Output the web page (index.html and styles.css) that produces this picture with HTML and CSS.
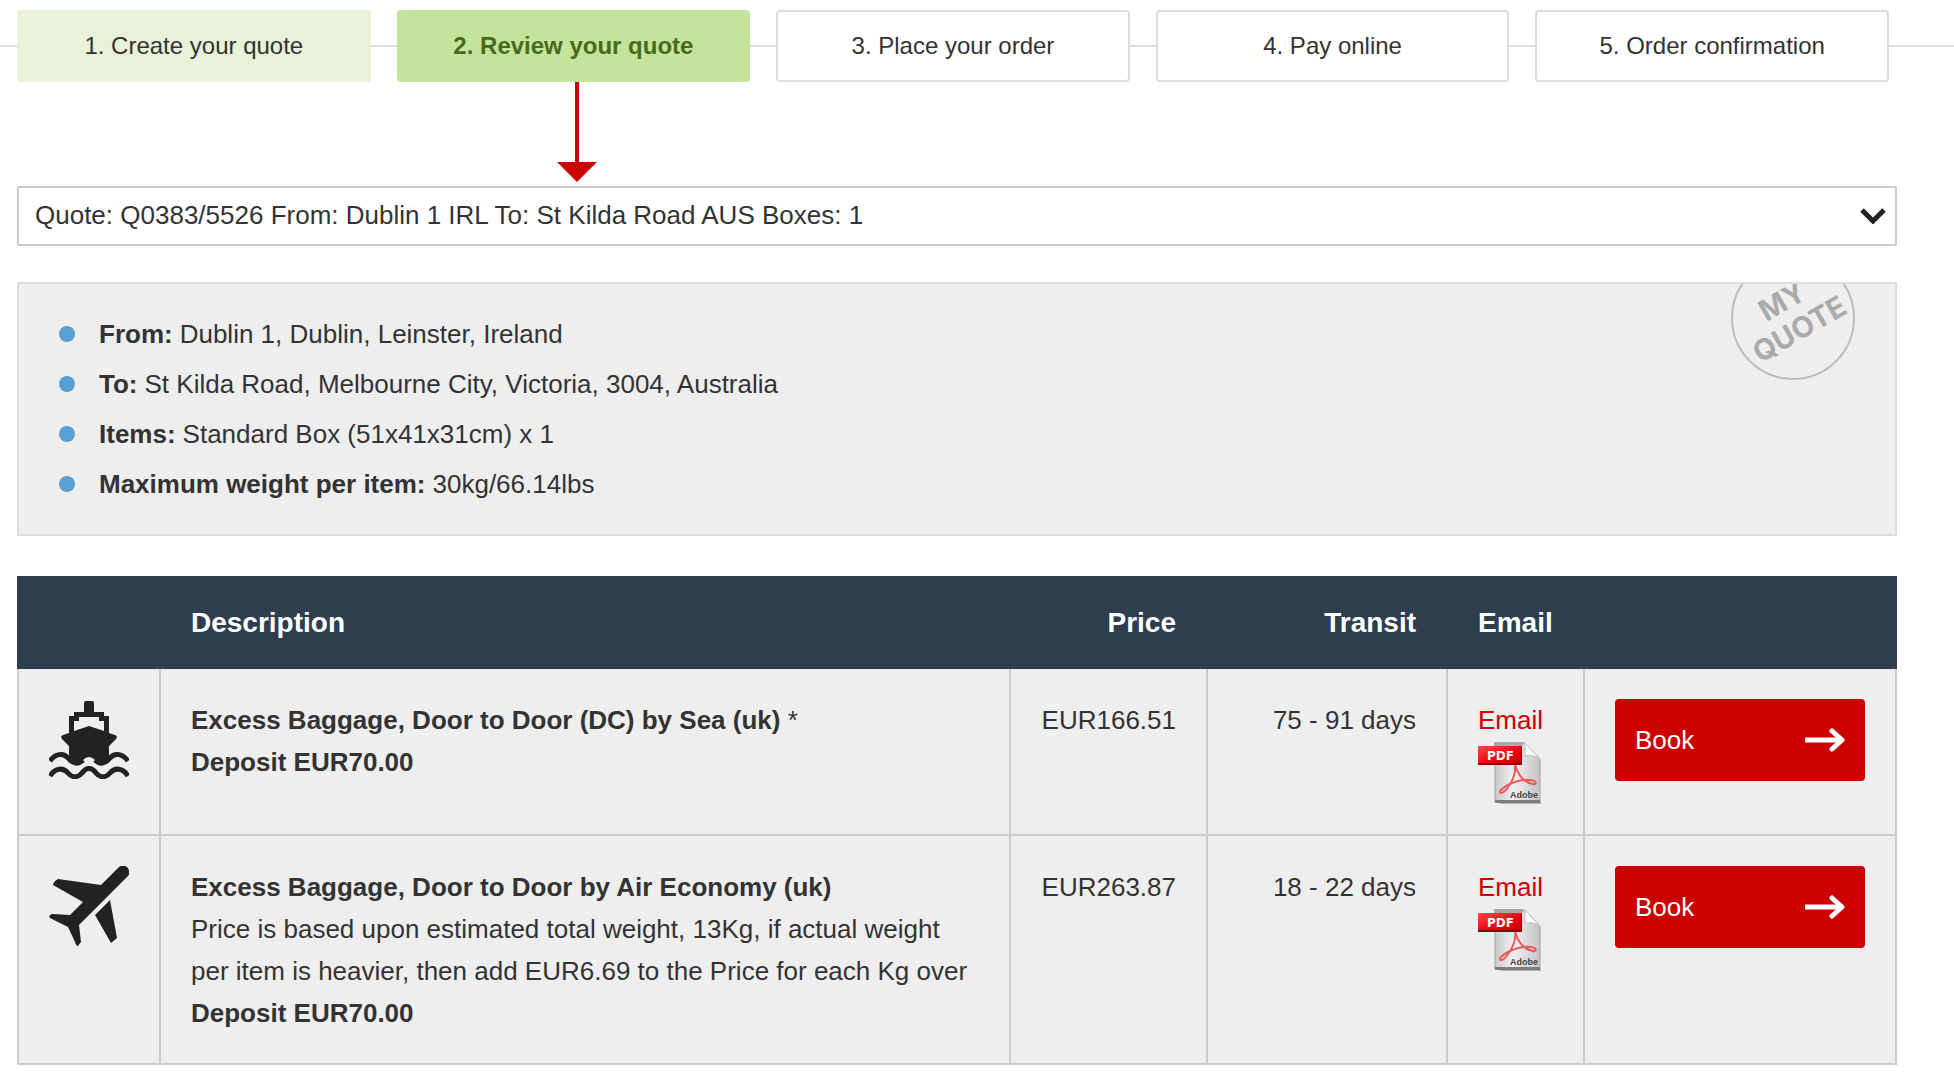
FILE: index.html
```html
<!DOCTYPE html>
<html lang="en">
<head>
  <meta charset="UTF-8" />
  <meta name="viewport" content="width=device-width, initial-scale=1.0"/>
  <title>Review your quote</title>
  <link rel="stylesheet" href="styles.css">
</head>
<body>

  <!-- shared icons -->
  <svg class="icon-defs" width="0" height="0" aria-hidden="true">
    <defs>
      <linearGradient id="pageFill" x1="0" y1="0" x2="1" y2="0">
        <stop offset="0" stop-color="#c9c9cc"/>
        <stop offset="0.4" stop-color="#f1f1f3"/>
        <stop offset="1" stop-color="#c4c4c6"/>
      </linearGradient>
      <linearGradient id="redFill" x1="0" y1="0" x2="1" y2="1">
        <stop offset="0" stop-color="#ff4a4a"/>
        <stop offset="0.6" stop-color="#e8000b"/>
        <stop offset="1" stop-color="#c00008"/>
      </linearGradient>
    </defs>
    <symbol id="icon-pdf" viewBox="0 0 64 64">
      <path d="M22 61h41v2H22z" fill="#b5b5b5"/>
      <path d="M17 2h30l15 16v43H17z" fill="url(#pageFill)" stroke="#a2a2a4" stroke-width="1"/>
      <path d="M16 1h29v4H16z" fill="#a9a9ab"/>
      <path d="M17 59h45v3H17z" fill="#7c7c7c"/>
      <path d="M47 2l15 16c-4-3-9-4-15-3z" fill="#fff" stroke="#bdbdbf" stroke-width="1"/>
      <path d="M37 23c1 9-1 14-5 20-3 5-6 9-9 9-3-1 1-5 7-8 8-4 16-6 23-5 6 1 6 5 2 4-8-1-15-8-18-20z" fill="none" stroke="#ec5a5a" stroke-width="2"/>
      <rect x="0" y="5" width="44" height="18" fill="url(#redFill)"/>
      <path d="M0 22h44v2H0zM43 6h1v17h-1z" fill="#8c0006"/>
      <text x="9" y="19" class="pdf-label">PDF</text>
      <text x="32" y="57" class="adobe-label">Adobe</text>
    </symbol>
    <symbol id="icon-arrow" viewBox="0 0 40 24">
      <path d="M0 12h36" fill="none" stroke="#fff" stroke-width="5"/>
      <path d="M27 3l10 9-10 9" fill="none" stroke="#fff" stroke-width="5" stroke-linejoin="round" stroke-linecap="round"/>
    </symbol>
  </svg>

  <ol class="steps">
    <li class="step done">1. Create your quote</li>
    <li class="step current">2. Review your quote
      <svg class="step-arrow" viewBox="0 0 40 100" aria-hidden="true">
        <path d="M18 0h4v80h18L20 100 0 80h18z" fill="#c00"/>
      </svg>
    </li>
    <li class="step">3. Place your order</li>
    <li class="step">4. Pay online</li>
    <li class="step">5. Order confirmation</li>
  </ol>

  <main class="content">
    <div class="quote-select">
      <select aria-label="Quote">
        <option>Quote: Q0383/5526 From: Dublin 1 IRL To: St Kilda Road AUS Boxes: 1</option>
      </select>
      <svg class="chevron" viewBox="0 0 26 16" aria-hidden="true">
        <path d="M2 2l11 11L24 2" fill="none" stroke="#222" stroke-width="5"/>
      </svg>
    </div>

    <section class="summary">
      <ul>
        <li><strong>From:</strong> Dublin 1, Dublin, Leinster, Ireland</li>
        <li><strong>To:</strong> St Kilda Road, Melbourne City, Victoria, 3004, Australia</li>
        <li><strong>Items:</strong> Standard Box (51x41x31cm) x 1</li>
        <li><strong>Maximum weight per item:</strong> 30kg/66.14lbs</li>
      </ul>
      <svg class="stamp" viewBox="0 0 126 98">
        <circle cx="63" cy="34" r="61" fill="none" stroke="#bbb" stroke-width="2"/>
        <g transform="rotate(-30 63 34)">
          <text x="62" y="24">MY</text>
          <text x="63" y="57">QUOTE</text>
        </g>
      </svg>
    </section>

    <table class="quotes">
      <colgroup>
        <col class="col-icon">
        <col>
        <col class="col-price">
        <col class="col-transit">
        <col class="col-email">
        <col class="col-book">
      </colgroup>
      <thead>
        <tr>
          <th></th>
          <th>Description</th>
          <th class="right">Price</th>
          <th class="right">Transit</th>
          <th>Email</th>
          <th></th>
        </tr>
      </thead>
      <tbody>
        <tr>
          <td>
            <svg class="mode-icon" viewBox="0 0 80 80" role="img" aria-label="Sea">
              <path d="M35 4q0-2 2-2h6q2 0 2 2v9h10v4h5v17l6 2q3 1 1 4l-7 7v11q-3 7-8 7-3 0-6-4-3-3-6-3t-6 3q-3 4-6 4-5 0-8-7V47l-7-7q-2-3 1-4l6-2V17h5v-4h10zM25 22v10l15-5 15 5V22h-5v-4H30v4z" fill="#222" fill-rule="evenodd"/>
              <path d="M1 62c5-7 13-9 18-3 5 6 10 7 15 2M46 61c5 5 10 4 15-2 5-6 13-4 18 3" fill="none" stroke="#222" stroke-width="5"/>
              <path d="M1 77c5-8 13-9 18-3 4 5 10 5 14 0 4-6 10-6 14 0 4 5 10 5 14 0 5-6 13-5 18 3" fill="none" stroke="#222" stroke-width="5"/>
            </svg>
          </td>
          <td>
            <strong>Excess Baggage, Door to Door (DC) by Sea (uk)</strong> *<br>
            <strong>Deposit EUR70.00</strong>
          </td>
          <td class="right">EUR166.51</td>
          <td class="right">75 - 91 days</td>
          <td>
            <a class="email-link" href="#">Email</a>
            <a class="pdf-link" href="#" aria-label="PDF"><svg class="pdf-icon"><use href="#icon-pdf"/></svg></a>
          </td>
          <td>
            <button type="button" class="book-btn">Book <svg class="btn-arrow" aria-hidden="true"><use href="#icon-arrow"/></svg></button>
          </td>
        </tr>
        <tr>
          <td>
            <svg class="mode-icon" viewBox="0 0 80 80" role="img" aria-label="Air">
              <path d="M70 1q4-3 8 0 4 5 1 9L30 59l2 17-3 4q-2 0-3-4l-7-15L1 52q-2-3 2-4l18 1 13-13L4 19q0-3 5-6l43 6zM61 34l7 38-6 5-16-28z" fill="#222"/>
            </svg>
          </td>
          <td>
            <strong>Excess Baggage, Door to Door by Air Economy (uk)</strong><br>
            Price is based upon estimated total weight, 13Kg, if actual weight per item is heavier, then add EUR6.69 to the Price for each Kg over<br>
            <strong>Deposit EUR70.00</strong>
          </td>
          <td class="right">EUR263.87</td>
          <td class="right">18 - 22 days</td>
          <td>
            <a class="email-link" href="#">Email</a>
            <a class="pdf-link" href="#" aria-label="PDF"><svg class="pdf-icon"><use href="#icon-pdf"/></svg></a>
          </td>
          <td>
            <button type="button" class="book-btn">Book <svg class="btn-arrow" aria-hidden="true"><use href="#icon-arrow"/></svg></button>
          </td>
        </tr>
      </tbody>
    </table>
  </main>

</body>
</html>
```
FILE: styles.css
```css
* {
  box-sizing: border-box;
}

body {
  margin: 0;
  padding: 10px 0 30px;
  font-family: Arial, "Liberation Sans", sans-serif;
  font-size: 26px;
  line-height: 42px;
  color: #333;
  background: #fff;
}

.icon-defs {
  position: absolute;
}

/* progress steps */
.steps {
  display: flex;
  gap: 26px;
  margin: 0;
  padding: 0 65px 0 17px;
  list-style: none;
  font-size: 24px;
  background: linear-gradient(#ddd, #ddd) center / 100% 2px no-repeat;
}

.step {
  position: relative;
  flex: 1;
  padding: 13px 10px;
  text-align: center;
  background: #fff;
  border: 2px solid #ddd;
  border-radius: 4px;
}

.step.done {
  background: #e7f2d8;
  border-color: #e7f2d8;
}

.step.current {
  background: #c4e49b;
  border-color: #c4e49b;
  color: #466b1d;
  font-weight: bold;
}

.step-arrow {
  position: absolute;
  top: 100%;
  left: 50%;
  width: 40px;
  height: 100px;
  margin: 2px 0 0 -16px;
}

.content {
  padding: 104px 57px 0 17px;
}

/* quote picker */
.quote-select {
  position: relative;
  margin-bottom: 36px;
}

.quote-select select {
  display: block;
  width: 100%;
  height: 60px;
  padding: 0 60px 2px 16px;
  font: inherit;
  color: #333;
  background: #fff;
  border: 2px solid #ccc;
  border-radius: 0;
  appearance: none;
}

.chevron {
  position: absolute;
  top: 22px;
  right: 11px;
  width: 26px;
  height: 16px;
  pointer-events: none;
}

/* quote summary */
.summary {
  position: relative;
  margin-bottom: 40px;
  padding: 29px 40px 21px;
  background: #eee;
  border: 2px solid #ddd;
}

.summary ul {
  margin: 0;
  padding: 0;
  list-style: none;
}

.summary li {
  display: flex;
  align-items: center;
  gap: 7px;
  margin-bottom: 8px;
}

.summary li::before {
  content: "";
  width: 16px;
  height: 16px;
  margin-right: 17px;
  border-radius: 50%;
  background: #5a9fd4;
}

.stamp {
  position: absolute;
  top: 0;
  right: 39px;
  width: 126px;
  height: 98px;
}

.stamp text {
  font-family: Inter, sans-serif;
  font-size: 29px;
  font-weight: 700;
  text-anchor: middle;
  fill: #aaa;
}

/* quotes table */
.quotes {
  width: 100%;
  table-layout: fixed;
  border-collapse: collapse;
}

.col-icon { width: 142px; }
.col-price { width: 197px; }
.col-transit { width: 240px; }
.col-email { width: 137px; }
.col-book { width: 312px; }

.quotes th {
  padding: 22px 30px;
  font-size: 28px;
  line-height: 45px;
  text-align: left;
  color: #fff;
  background: #2f3e4e;
  border: 2px solid #2f3e4e;
}

.quotes td {
  padding: 30px 30px 29px;
  vertical-align: top;
  background: #eee;
  border: 2px solid #ccc;
  border-top: none;
}

.quotes .right {
  text-align: right;
}

.mode-icon {
  display: block;
  width: 80px;
  height: 80px;
}

.email-link {
  color: #c00;
  text-decoration: none;
}

.pdf-link,
.pdf-icon {
  display: block;
  width: 64px;
  height: 64px;
}

.pdf-label {
  font: bold 12px "DejaVu Sans", sans-serif;
  fill: #fff;
}

.adobe-label {
  font: bold 9px "Liberation Sans", sans-serif;
  fill: #444;
}

.book-btn {
  display: flex;
  justify-content: space-between;
  align-items: center;
  width: 100%;
  padding: 20px;
  font: inherit;
  color: #fff;
  background: #c00;
  border: none;
  border-radius: 4px;
  cursor: pointer;
}

.book-btn:hover {
  background: #a00;
}

.btn-arrow {
  width: 40px;
  height: 24px;
}
```
